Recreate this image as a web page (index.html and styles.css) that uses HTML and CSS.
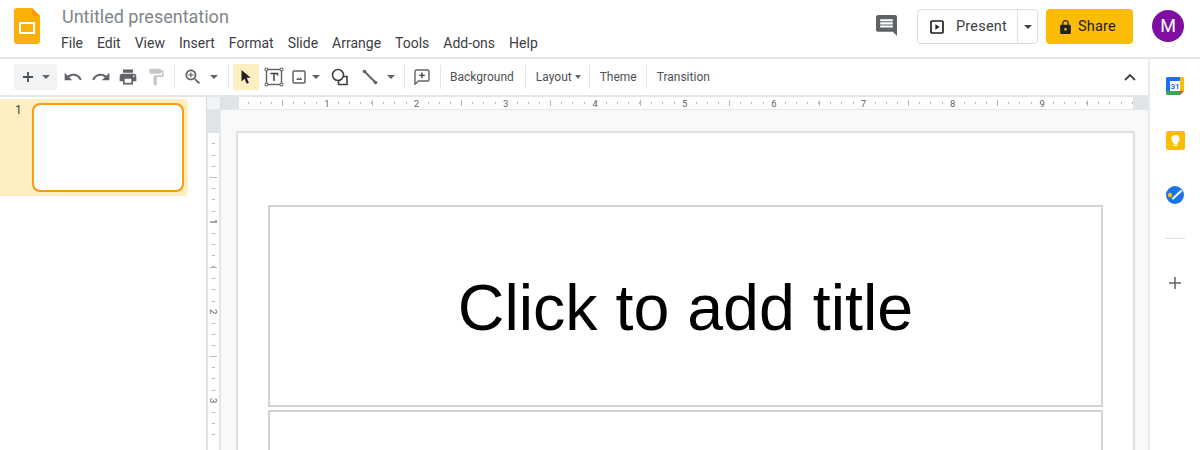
FILE: index.html
```html
<!DOCTYPE html>
<html lang="en">
<head>
    <meta charset="UTF-8">
    <title>Untitled presentation - Google Slides</title>
    <link rel="stylesheet" href="styles.css">
</head>
<body>
    <header class="header">
        <svg class="logo" viewBox="0 0 26 36" width="26" height="36">
            <path d="M3 0h15l8 8v25a3 3 0 0 1-3 3H3a3 3 0 0 1-3-3V3a3 3 0 0 1 3-3z" fill="#fbaf0b"/>
            <path d="M18 0l8 8h-6a2 2 0 0 1-2-2z" fill="#f79a0a"/>
            <rect x="6" y="15" width="14" height="10" fill="none" stroke="#fff" stroke-width="2"/>
        </svg>
        <div class="doc">
            <div class="doc-title">Untitled presentation</div>
            <nav class="menu">
                <span>File</span><span>Edit</span><span>View</span><span>Insert</span><span>Format</span><span>Slide</span><span>Arrange</span><span>Tools</span><span>Add-ons</span><span>Help</span>
            </nav>
        </div>
        <svg class="comments" viewBox="2 2 20 20" width="21" height="21"><path d="M21.99 4c0-1.1-.89-2-1.99-2H4c-1.1 0-2 .9-2 2v12c0 1.1.9 2 2 2h14l4 4-.01-18zM18 14H6v-2h12v2zm0-3H6V9h12v2zm0-3H6V6h12v2z" fill="#5f6368"/></svg>
        <div class="present">
            <div class="present-main">
                <svg viewBox="0 0 14 14" width="14" height="14"><rect x="1" y="1" width="12" height="12" rx="1" fill="none" stroke="#202124" stroke-width="1.7"/><path d="M5.4 4.2v5.6L9.6 7z" fill="#202124"/></svg>
                <span>Present</span>
            </div>
            <div class="present-more"><i class="caret caret-dark"></i></div>
        </div>
        <div class="share">
            <svg viewBox="4 1 16 21" width="11" height="14"><path d="M18 8h-1V6c0-2.76-2.24-5-5-5S7 3.24 7 6v2H6c-1.1 0-2 .9-2 2v10c0 1.1.9 2 2 2h12c1.1 0 2-.9 2-2V10c0-1.1-.9-2-2-2zm-6 9c-1.1 0-2-.9-2-2s.9-2 2-2 2 .9 2 2-.9 2-2 2zm3.1-9H8.9V6c0-1.71 1.39-3.1 3.1-3.1 1.71 0 3.1 1.39 3.1 3.1v2z" fill="#202124"/></svg>
            <span>Share</span>
        </div>
        <div class="avatar">M</div>
    </header>

    <div class="app">
        <div class="main">
            <div class="toolbar">
                <div class="add-group">
                    <svg viewBox="0 0 12 12" width="12" height="12"><path d="M6 1v10M1 6h10" stroke="#4a4e52" stroke-width="1.8"/></svg>
                    <i class="caret"></i>
                </div>
                <button class="tool ml4"><svg viewBox="0 0 24 24" width="20" height="20"><path d="M12.5 8c-2.65 0-5.05.99-6.9 2.6L2 7v9h9l-3.62-3.62c1.39-1.16 3.16-1.88 5.12-1.88 3.54 0 6.55 2.31 7.6 5.5l2.37-.78C21.08 11.03 17.15 8 12.5 8z" fill="#5f6368"/></svg></button>
                <button class="tool ml4"><svg viewBox="0 0 24 24" width="20" height="20"><path d="M18.4 10.6C16.55 8.99 14.15 8 11.5 8c-4.65 0-8.58 3.03-9.96 7.22L3.9 16c1.05-3.19 4.05-5.5 7.6-5.5 1.95 0 3.73.72 5.12 1.88L13 16h9V7l-3.6 3.6z" fill="#5f6368"/></svg></button>
                <button class="tool ml3"><svg viewBox="0 0 24 24" width="20" height="20"><path d="M19 8H5c-1.66 0-3 1.34-3 3v6h4v4h12v-4h4v-6c0-1.66-1.34-3-3-3zm-3 11H8v-5h8v5zm3-7c-.55 0-1-.45-1-1s.45-1 1-1 1 .45 1 1-.45 1-1 1zm-1-9H6v4h12V3z" fill="#5f6368"/></svg></button>
                <button class="tool ml4"><svg viewBox="0 0 24 24" width="20" height="20"><path d="M18 4V3c0-.55-.45-1-1-1H5c-.55 0-1 .45-1 1v4c0 .55.45 1 1 1h12c.55 0 1-.45 1-1V6h1v4H9v11c0 .55.45 1 1 1h2c.55 0 1-.45 1-1v-9h8V4h-3z" fill="#c4c7c9"/></svg></button>
                <i class="sep ml6"></i>
                <button class="tool ml6"><svg viewBox="0 0 24 24" width="20" height="20"><path d="M15.5 14h-.79l-.28-.27C15.41 12.59 16 11.11 16 9.5 16 5.91 13.09 3 9.5 3S3 5.91 3 9.5 5.91 16 9.5 16c1.61 0 3.09-.59 4.23-1.57l.27.28v.79l5 4.99L20.49 19l-4.99-5zm-6 0C7.01 14 5 11.99 5 9.5S7.01 5 9.5 5 14 7.01 14 9.5 11.99 14 9.5 14z" fill="#5f6368"/><path d="M9.5 6.5v6M6.5 9.5h6" stroke="#5f6368" stroke-width="1.4"/></svg></button>
                <button class="tool-caret ml3"><i class="caret"></i></button>
                <i class="sep ml8"></i>
                <button class="tool tool-active ml4"><svg viewBox="0 0 14 16" width="14" height="16"><path d="M2.500 1v11.500l3-2.800 2.200 5.100 2.200-1-2.200-5h4z" fill="#202124"/></svg></button>
                <button class="tool ml3"><svg viewBox="0 0 20 20" width="20" height="20"><rect x="2.500" y="2.500" width="15" height="15" fill="none" stroke="#5f6368" stroke-width="1.400"/><path d="M6.500 6.500h7v2M10 6.500v7.500" fill="none" stroke="#3c4043" stroke-width="1.500"/><g fill="#fff" stroke="#5f6368" stroke-width="1.100"><circle cx="2.500" cy="2.500" r="1.500"/><circle cx="17.500" cy="2.500" r="1.500"/><circle cx="2.500" cy="17.500" r="1.500"/><circle cx="17.500" cy="17.500" r="1.500"/></g></svg></button>
                <button class="tool ml1"><svg viewBox="0 0 14 14" width="14" height="14"><rect x="1" y="1" width="12" height="12" rx="1" fill="none" stroke="#5f6368" stroke-width="1.500"/><path d="M4 10l2-2.400 1.300 1.400L8.600 7l1.600 3z" fill="#5f6368"/></svg></button>
                <button class="tool-caret tool-caret-narrow"><i class="caret"></i></button>
                <button class="tool ml7"><svg viewBox="0 0 18 18" width="18" height="18"><circle cx="7" cy="7" r="5.500" fill="none" stroke="#3c4043" stroke-width="1.600"/><path d="M12.500 8.500h3.500v8H7.500v-3.500" fill="none" stroke="#3c4043" stroke-width="1.600"/></svg></button>
                <button class="tool ml6"><svg viewBox="0 0 16 16" width="16" height="16"><path d="M2.500 2.500l11 11" stroke="#5f6368" stroke-width="2"/><circle cx="2.500" cy="2.500" r="1.800" fill="#5f6368"/><circle cx="13.500" cy="13.500" r="1.800" fill="#5f6368"/></svg></button>
                <button class="tool-caret tool-caret-narrow ml4"><i class="caret"></i></button>
                <i class="sep ml8"></i>
                <button class="tool ml5"><svg viewBox="0 0 16 16" width="16" height="16"><path d="M1 2.300C1 1.600 1.600 1 2.300 1h11.400c.7 0 1.300.6 1.300 1.300v8.400c0 .7-.6 1.300-1.300 1.300H4.400L1 15.200z" fill="none" stroke="#5f6368" stroke-width="1.400"/><path d="M8 3.600v5.600M5.200 6.400h5.600" stroke="#3c4043" stroke-width="1.400"/></svg></button>
                <i class="sep ml6"></i>
                <span class="tool-text ml9">Background</span>
                <i class="sep ml11"></i>
                <span class="tool-text ml10">Layout</span>
                <i class="caret caret-small ml3"></i>
                <i class="sep ml8"></i>
                <span class="tool-text ml10">Theme</span>
                <i class="sep ml9"></i>
                <span class="tool-text ml10">Transition</span>
                <svg class="collapse" viewBox="0 0 12 8" width="12" height="8"><path d="M1 7l5-5 5 5" fill="none" stroke="#3c4043" stroke-width="1.800"/></svg>
            </div>

            <div class="editor">
                <aside class="filmstrip">
                    <div class="slide-row">
                        <span class="slide-num">1</span>
                        <div class="thumb"></div>
                    </div>
                </aside>
                <div class="stage">
                    <div class="corner"></div>
                    <div class="ruler-h">
                        <div class="ruler-end ruler-end-left"></div>
                        <div class="ruler-track">
                            <span class="cell-start"></span>
                            <span class="cell"><b>1</b></span><span class="cell"><b>2</b></span><span class="cell"><b>3</b></span><span class="cell"><b>4</b></span><span class="cell"><b>5</b></span><span class="cell"><b>6</b></span><span class="cell"><b>7</b></span><span class="cell"><b>8</b></span><span class="cell"><b>9</b></span><span class="cell"></span>
                        </div>
                        <div class="ruler-end ruler-end-right"></div>
                    </div>
                    <div class="ruler-v">
                        <div class="ruler-v-end"></div>
                        <span class="vcell-start"></span>
                        <span class="vcell"><b>1</b></span><span class="vcell"><b>2</b></span><span class="vcell"><b>3</b></span>
                    </div>
                    <div class="canvas">
                        <div class="slide">
                            <div class="placeholder title-box">Click to add title</div>
                            <div class="placeholder subtitle-box"></div>
                        </div>
                    </div>
                </div>
            </div>
        </div>

        <aside class="sidebar">
            <svg class="side-icon" viewBox="0 0 18 18" width="18" height="18">
                <rect width="18" height="18" rx="1.500" fill="#fff"/>
                <path d="M1.500 0H14v4H4v10H0V1.500A1.500 1.500 0 0 1 1.500 0z" fill="#1a73e8"/>
                <path d="M14 0h2.500A1.500 1.500 0 0 1 18 1.500V14h-4z" fill="#fbbc04"/>
                <path d="M0 14h14v4H1.500A1.500 1.500 0 0 1 0 16.500z" fill="#34a853"/>
                <path d="M14 14h4l-4 4z" fill="#ea4335"/>
                <text x="9" y="12" class="cal-num">31</text>
            </svg>
            <svg class="side-icon" viewBox="0 0 19 19" width="19" height="19">
                <rect width="19" height="19" rx="2" fill="#fbbc04"/>
                <circle cx="9.500" cy="8" r="4" fill="#fff"/>
                <rect x="7.500" y="11" width="4" height="2" fill="#fff"/>
                <rect x="7.500" y="13.500" width="4" height="1.500" fill="#fff"/>
            </svg>
            <svg class="side-icon" viewBox="0 0 18 18" width="18" height="18">
                <circle cx="9" cy="9" r="9" fill="#1a73e8"/>
                <circle cx="4" cy="9" r="2.200" fill="#fbbc04"/>
                <path d="M7 12.500L15 5" stroke="#fff" stroke-width="2" stroke-linecap="round"/>
            </svg>
            <i class="side-rule"></i>
            <svg class="side-plus" viewBox="0 0 12 12" width="12" height="12"><path d="M6 0v12M0 6h12" stroke="#5f6368" stroke-width="1.500"/></svg>
        </aside>
    </div>
</body>
</html>
```

FILE: styles.css
```css
* {
    box-sizing: border-box;
}

html, body {
    margin: 0;
    height: 450px;
    overflow: hidden;
}

body {
    font-family: Roboto, "Liberation Sans", sans-serif;
    background: #fff;
    color: #3c4043;
}

/* header */
.header {
    height: 59px;
    display: flex;
    align-items: flex-start;
    border-bottom: 2px solid #e4e6e8;
}

.logo {
    margin: 8px 0 0 14px;
    flex: none;
}

.doc {
    margin-left: 22px;
}

.doc-title {
    font-size: 18px;
    line-height: 24px;
    margin-top: 5px;
    color: #80868b;
}

.menu {
    display: flex;
    gap: 14px;
    font-size: 14px;
    line-height: 18px;
    margin: 5px 0 0 -1px;
    color: #3c4043;
}

.comments {
    margin: 15px 0 0 auto;
}

.present {
    display: flex;
    height: 35px;
    width: 121px;
    margin: 9px 0 0 20px;
    border: 1px solid #dadce0;
    border-radius: 4px;
}

.present-main {
    width: 100px;
    display: flex;
    align-items: center;
    gap: 12px;
    padding-left: 12px;
    font-size: 14.5px;
    letter-spacing: 0.2px;
    border-right: 1px solid #dadce0;
    color: #3c4043;
}

.present-more {
    flex: 1;
    display: flex;
    align-items: center;
    justify-content: center;
}

.share {
    display: flex;
    align-items: center;
    gap: 7px;
    width: 87px;
    height: 35px;
    margin: 9px 0 0 8px;
    padding-left: 14px;
    background: #fbbc04;
    border-radius: 4px;
    font-size: 14.5px;
    letter-spacing: 0.2px;
    color: #202124;
}

.avatar {
    width: 32px;
    height: 32px;
    margin: 10px 16px 0 19px;
    border-radius: 50%;
    background: #7e0fa0;
    color: #fff;
    font-size: 18px;
    line-height: 32px;
    text-align: center;
}

/* page body */
.app {
    display: flex;
    height: 391px;
}

.main {
    flex: 1;
    min-width: 0;
    display: flex;
    flex-direction: column;
}

.sidebar {
    width: 52px;
    flex: none;
    border-left: 2px solid #e8eaed;
    display: flex;
    flex-direction: column;
    align-items: center;
    padding-top: 18px;
}

.side-icon {
    margin-bottom: 36px;
}

.side-rule {
    width: 20px;
    height: 1px;
    margin-top: -2px;
    background: #dadce0;
}

.side-plus {
    margin-top: 38px;
}

.cal-num {
    font: 700 8px Roboto, sans-serif;
    fill: #1a73e8;
    text-anchor: middle;
}

/* toolbar */
.toolbar {
    height: 38px;
    flex: none;
    display: flex;
    align-items: center;
    padding-left: 14px;
    border-bottom: 2px solid #e4e6e8;
}

.add-group {
    width: 43px;
    height: 26px;
    display: flex;
    align-items: center;
    justify-content: space-between;
    padding: 0 7px 0 8px;
    background: #f1f3f4;
    border-radius: 3px;
}

.tool, .tool-caret {
    height: 26px;
    padding: 0;
    border: 0;
    background: none;
    display: flex;
    align-items: center;
    justify-content: center;
    flex: none;
}

.tool {
    width: 24px;
}

.tool-caret {
    width: 12px;
}

.tool-caret-narrow {
    width: 10px;
}

.tool-active {
    width: 26px;
    background: #feefc3;
}

.caret {
    display: block;
    flex: none;
    width: 0;
    height: 0;
    border-left: 4px solid transparent;
    border-right: 4px solid transparent;
    border-top: 4px solid #5f6368;
}

.caret-dark {
    border-top-color: #3c4043;
}

.caret-small {
    border-left-width: 3.5px;
    border-right-width: 3.5px;
}

.sep {
    width: 1px;
    height: 24px;
    flex: none;
    background: #e3e5e7;
}

.tool-text {
    font-size: 12px;
    color: #4d5155;
    flex: none;
}

.collapse {
    margin-left: auto;
    margin-right: 12px;
}

.ml1 { margin-left: 1px; }
.ml3 { margin-left: 3px; }
.ml4 { margin-left: 4px; }
.ml5 { margin-left: 5px; }
.ml6 { margin-left: 6px; }
.ml7 { margin-left: 7px; }
.ml8 { margin-left: 8px; }
.ml9 { margin-left: 9px; }
.ml10 { margin-left: 10px; }
.ml11 { margin-left: 11px; }

/* filmstrip and editor */
.editor {
    flex: 1;
    min-height: 0;
    display: flex;
}

.filmstrip {
    width: 207px;
    flex: none;
    padding-top: 2px;
    border-right: 1px solid #dadce0;
}

.slide-row {
    width: 188px;
    height: 97px;
    display: flex;
    padding: 4px 4px 4px 15px;
    background: #feefc3;
    border-radius: 0 4px 4px 0;
}

.slide-num {
    width: 17px;
    font-size: 12px;
    line-height: 14px;
    color: #3c4043;
}

.thumb {
    width: 152px;
    height: 89px;
    background: #fff;
    border: 2px solid #fa9a10;
    border-radius: 8px;
}

.stage {
    flex: 1;
    min-width: 0;
    display: grid;
    grid-template-columns: 13px minmax(0, 1fr);
    grid-template-rows: 13px minmax(0, 1fr);
    background: #f8f9fa;
}

.corner {
    background: #f1f3f4;
    border-bottom: 1px solid #e4e6e8;
}

/* rulers */
.ruler-h {
    display: flex;
    min-width: 0;
    border-bottom: 1px solid #e4e6e8;
}

.ruler-end {
    flex: none;
    background: #e1e4e7;
}

.ruler-end-left {
    width: 19px;
}

.ruler-end-right {
    width: 15px;
}

.ruler-track {
    flex: 1;
    min-width: 0;
    display: flex;
    overflow: hidden;
    background: #fff;
}

.cell-start, .cell {
    flex: none;
    position: relative;
    display: flex;
    align-items: center;
    justify-content: center;
    background-size: 100% 2px;
    background-repeat: no-repeat;
    background-position: 0 5px;
}

.cell-start {
    width: 43.3px;
    background-image: repeating-linear-gradient(270deg, transparent 0 10.175px, #b4b8bb 10.175px 11.175px);
}

.cell {
    width: 89.4px;
    background-image: repeating-linear-gradient(90deg, #b4b8bb 0 1px, transparent 1px 11.175px);
}

.cell::before {
    content: "";
    position: absolute;
    left: 0;
    top: 3px;
    width: 1px;
    height: 6px;
    background: #b4b8bb;
}

.cell b, .vcell b {
    font-weight: 400;
    font-size: 9.5px;
    line-height: 11px;
    background: #fff;
    color: #5f6368;
}

.ruler-v {
    display: flex;
    flex-direction: column;
    overflow: hidden;
    min-height: 0;
    background: #fff;
    border-left: 1px solid #e4e6e8;
    border-right: 1px solid #e4e6e8;
}

.ruler-v-end {
    height: 23px;
    flex: none;
    background: #e1e4e7;
}

.vcell-start, .vcell {
    flex: none;
    position: relative;
    display: flex;
    align-items: center;
    justify-content: center;
    background-size: 3px 100%;
    background-repeat: no-repeat;
    background-position: 4px 0;
}

.vcell-start {
    height: 44.3px;
    background-image: repeating-linear-gradient(0deg, transparent 0 10.175px, #b4b8bb 10.175px 11.175px);
}

.vcell {
    height: 89.4px;
    background-image: repeating-linear-gradient(180deg, #b4b8bb 0 1px, transparent 1px 11.175px);
}

.vcell::before {
    content: "";
    position: absolute;
    top: 0;
    left: 2px;
    width: 7px;
    height: 1px;
    background: #b4b8bb;
}

.vcell b {
    writing-mode: vertical-rl;
}

/* slide */
.canvas {
    overflow: hidden;
    min-width: 0;
    min-height: 0;
    padding: 22px 0 0 16px;
    border-left: 1px solid #e4e6e8;
}

.slide {
    width: 897px;
    height: 500px;
    padding: 72px 30px 0;
    background: #fff;
    border: 1px solid #dadce0;
    box-shadow: 0 0 2px rgba(60, 64, 67, 0.35);
}

.placeholder {
    border: 2px solid #d4d4d4;
}

.title-box {
    height: 202px;
    padding-top: 4px;
    display: flex;
    align-items: center;
    justify-content: center;
    font-family: "Liberation Sans", Arial, sans-serif;
    font-size: 64.5px;
    color: #000;
}

.subtitle-box {
    height: 120px;
    margin-top: 3px;
}
```
